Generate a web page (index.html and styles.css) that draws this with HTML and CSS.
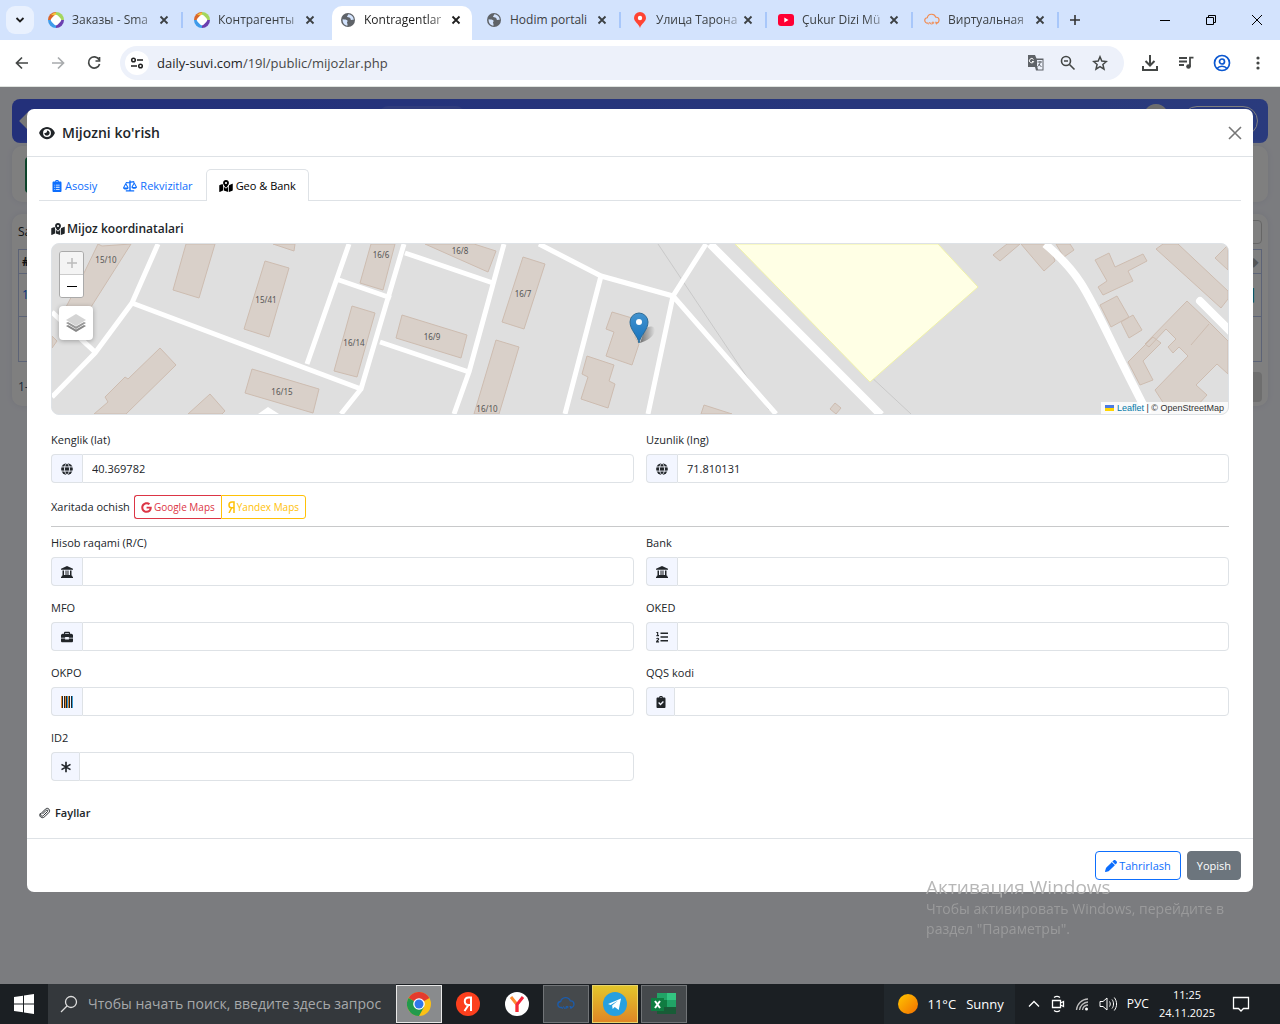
FILE: index.html
```html
<!DOCTYPE html>
<html lang="uz">
<head>
<meta charset="utf-8">
<meta name="viewport" content="width=device-width, initial-scale=1">
<title>Kontragentlar</title>
<link rel="stylesheet" href="styles.css">
</head>
<body>
<svg class="sprite" aria-hidden="true">
  <symbol id="x" viewBox="0 0 16 16"><path d="M4.500 4.500l7 7m0-7l-7 7" fill="none" stroke="currentColor" stroke-width="1.800"/></symbol>
  <symbol id="ring" viewBox="0 0 16 16"><path d="M8 0A8 8 0 0 0 0 8l3 0 5-5z" fill="#d9662c"/><path d="M8 0a8 8 0 0 1 8 8h-3L8 3z" fill="#a4d65e"/><path d="M16 8a8 8 0 0 1-8 8v-3l5-5z" fill="#6b3fb0"/><path d="M8 16A8 8 0 0 1 0 8h3l5 5z" fill="#3f9bea"/><path d="M3 3a7 7 0 0 1 5-2.500v3z" fill="#f3c33c"/><rect x="3.600" y="3.600" width="8.800" height="8.800" rx="2.500" transform="rotate(45 8 8)" fill="#fff"/></symbol>
  <symbol id="world" viewBox="0 0 16 16"><circle cx="8" cy="8" r="7" fill="#5f6368"/><path d="M2.600 7.200c2 .3 4.200.2 4.900 1.200.6 1-.9 1.600-.4 2.600.4.900.6 1.500.3 2.700-3-.3-5-3-4.800-6.500zM8.500 2.300c-1 .8-.5 1.700-1.600 2 .2 1.600 2.300.8 3.200 1.600.6.700.3 1.800 1.400 2 .9.200 1.500-.6 2.200.2.200-3-2-5.400-5.200-5.800z" fill="#d3e3fd"/></symbol>
  <symbol id="eye" viewBox="0 0 576 512"><path fill="currentColor" d="M288 32c-80.800 0-145.500 36.800-192.600 80.600C48.600 156 17.300 208 2.500 243.700c-3.300 7.900-3.300 16.700 0 24.600C17.300 304 48.600 356 95.400 399.400C142.500 443.200 207.200 480 288 480s145.500-36.800 192.600-80.600c46.800-43.500 78.100-95.400 93-131.100c3.300-7.900 3.300-16.700 0-24.600c-14.900-35.700-46.200-87.700-93-131.100C433.500 68.800 368.800 32 288 32zM144 256a144 144 0 1 1 288 0 144 144 0 1 1 -288 0zm144-64c0 35.300-28.700 64-64 64c-7.100 0-13.900-1.200-20.300-3.300c-5.500-1.800-11.900 1.600-11.700 7.400c.3 6.900 1.300 13.800 3.200 20.700c13.700 51.200 66.400 81.600 117.600 67.900s81.600-66.400 67.900-117.600c-11.100-41.500-47.800-69.400-88.600-71.100c-5.800-.2-9.200 6.100-7.400 11.700c2.100 6.400 3.300 13.200 3.300 20.300z"/></symbol>
  <symbol id="mapmark" viewBox="0 0 576 512"><path fill="currentColor" d="M288 0c-69.590 0-126 56.410-126 126 0 56.260 82.350 158.800 113.900 196.020 6.390 7.540 17.820 7.540 24.200 0C331.650 284.800 414 182.260 414 126 414 56.410 357.590 0 288 0zm0 168c-23.200 0-42-18.800-42-42s18.800-42 42-42 42 18.800 42 42-18.800 42-42 42zM20.120 215.950A32.006 32.006 0 0 0 0 245.660v250.320c0 11.320 11.430 19.060 21.940 14.860L160 448V214.920c-8.840-15.980-16.070-31.540-21.250-46.420L20.120 215.950zM288 359.670c-14.070 0-27.380-6.180-36.510-16.960-19.660-23.200-40.570-49.620-59.490-76.720v182l192 64V266c-18.920 27.090-39.820 53.520-59.490 76.720-9.130 10.770-22.440 16.950-36.510 16.950zm266.060-198.510L416 224v288l139.880-55.950A31.996 31.996 0 0 0 576 426.340V176.020c0-11.320-11.430-19.060-21.940-14.860z"/></symbol>
  <symbol id="clip" viewBox="0 0 384 512"><path fill="currentColor" fill-rule="evenodd" d="M48 64h64C112 20 145 0 192 0s80 20 80 64h64c27 0 48 21 48 48v352c0 27-21 48-48 48H48c-27 0-48-21-48-48V112c0-27 21-48 48-48zm144-24a24 24 0 1 0 0 48 24 24 0 1 0 0-48zM80 200v36h36v-36zm70 0v36h154v-36zM80 290v36h36v-36zm70 0v36h154v-36zM80 380v36h36v-36zm70 0v36h154v-36z"/></symbol>
  <symbol id="clipcheck" viewBox="0 0 384 512"><path fill="currentColor" fill-rule="evenodd" d="M48 64h64C112 20 145 0 192 0s80 20 80 64h64c27 0 48 21 48 48v352c0 27-21 48-48 48H48c-27 0-48-21-48-48V112c0-27 21-48 48-48zm144-24a24 24 0 1 0 0 48 24 24 0 1 0 0-48zM70 300l100 100 144-144-40-40-104 104-60-60z"/></symbol>
  <symbol id="scale" viewBox="0 0 640 512"><path fill="currentColor" fill-rule="evenodd" d="M288 90V0h64v50l160-18v58L352 110v338h160v64H128v-64h160V130l-160 4V70zM128 100L0 336c0 50 58 80 128 80s128-30 128-80zm0 96l70 132H58zM512 70L384 306c0 50 58 80 128 80s128-30 128-80zm0 96l70 132H442z"/></symbol>
  <symbol id="globe" viewBox="0 0 16 16"><circle cx="8" cy="8" r="7.800" fill="currentColor"/><path d="M0 5.200h16M0 10.800h16M8 0C3.500 4 3.500 12 8 16M8 0c4.500 4 4.500 12 0 16" fill="none" stroke="#f3f6ff" stroke-width="1.200"/></symbol>
  <symbol id="bank" viewBox="0 0 16 16"><path fill="currentColor" d="M8 0l8 3.500V5H0V3.500zM2 6h2v6h2V6h1.400v6h1.200V6H10v6h2V6h2v6.500l1 .5v1l1 .6V16H0v-1.400L1 14v-1l1-.5z"/></symbol>
  <symbol id="case" viewBox="0 0 16 16"><path fill="currentColor" fill-rule="evenodd" d="M4 3.500V2l1-1h6l1 1v1.500h2L16 5v4h-5.500V8h-5v1H0V5l2-1.500zM5.500 3.500h5v-1h-5zM0 10h5.500v1.200h5V10H16v4l-1 1H1l-1-1z"/></symbol>
  <symbol id="list" viewBox="0 0 16 16"><path d="M6 3h10M6 8h10M6 13h10" stroke="currentColor" stroke-width="1.800"/><path d="M.5 2h1.700v4M.5 6.200h3.500M.6 10.300c1.200-1 3-.6 3 .5 0 1.300-2.600 2.300-2.900 3.700h3.400" stroke="currentColor" stroke-width="1.500" fill="none"/></symbol>
  <symbol id="barcode" viewBox="0 0 12 12"><g shape-rendering="crispEdges"><path fill="#e0882f" d="M0 0h1v12H0zM4 0h1v12H4zM7 0h1v12H7z"/><path fill="#212529" d="M1 0h1v12H1zM3 0h1v12H3zM5 0h1v12H5zM8 0h1v12H8zM10 0h1v12h-1z"/><path fill="#3aa0d8" d="M6 0h1v12H6zM11 0h1v12h-1z"/></g></symbol>
  <symbol id="star6" viewBox="0 0 14 16"><path d="M7 1v14M1 4.500l12 7M13 4.500l-12 7" stroke="currentColor" stroke-width="2.200"/></symbol>
  <symbol id="google" viewBox="0 0 488 512"><path fill="currentColor" d="M488 261.800C488 403.300 391.100 504 248 504 110.800 504 0 393.200 0 256S110.800 8 248 8c66.800 0 123 24.500 166.300 64.900l-67.500 64.900C258.500 52.600 94.300 116.600 94.300 256c0 86.500 69.100 156.600 153.700 156.600 98.200 0 135-70.400 140.800-106.900H248v-85.300h236.100c2.300 12.700 3.900 24.900 3.900 41.400z"/></symbol>
  <symbol id="yandex" viewBox="0 0 7 12"><path d="M6 12V1H4C2 1 1 2.300 1 4s1 2.800 2.400 2.800H6M3.600 7L1 12" fill="none" stroke="currentColor" stroke-width="1.500"/></symbol>
  <symbol id="pencil" viewBox="0 0 512 512"><path fill="currentColor" d="M410.300 231l11.300-11.300-33.900-33.900-62.100-62.100L291.700 89.800l-11.300 11.300-22.600 22.600L58.600 322.900c-10.400 10.400-18 23.300-22.200 37.400L1 480.700c-2.500 8.400-.2 17.500 6.100 23.700s15.300 8.500 23.700 6.100l120.300-35.400c14.100-4.200 27-11.800 37.400-22.200L387.700 253.700 410.300 231zM362.700 18.700L348.300 33.200 325.700 55.800 314.300 67.100l33.900 33.900 62.100 62.100 33.900 33.900 11.300-11.300 22.600-22.600 14.500-14.500c25-25 25-65.500 0-90.500L453.300 18.700c-25-25-65.500-25-90.500 0z"/></symbol>
  <symbol id="paperclip" viewBox="0 0 16 16"><path d="M4.500 9.500L9.600 4.400c1.300-1.300 3 .4 1.700 1.700l-5.400 5.400c-2.200 2.200-5.200-.8-3-3L8.600 2.800c3-3 7.600 1.400 4.500 4.600L7.500 13c-3.800 3.500-8.500-1-5.500-4.800" fill="none" stroke="currentColor" stroke-width="1.300"/></symbol>
  <symbol id="cloud" viewBox="0 0 18 16"><path d="M5 11.500H4a3 3 0 0 1-.3-6 5 5 0 0 1 9.600-.6 3.300 3.300 0 0 1 .7 6.600h-1" fill="none" stroke="currentColor" stroke-width="1.300"/><path d="M5 13l1.500-2.500L8 13m1-2.500V13m0-2.500h2v1.200H9m3.500-1.200h1.500v2.500" fill="none" stroke="currentColor"/></symbol>
</svg>

<header class="browser">
  <div class="tabstrip">
    <button class="tabsearch" aria-label="Tabs"><svg width="12" height="12" viewBox="0 0 12 12"><path d="M2.500 4L6 7.500 9.500 4" fill="none" stroke="#1f1f1f" stroke-width="1.800"/></svg></button>
    <div class="tab sep"><svg class="fav"><use href="#ring"/></svg><span class="tabname fade">Заказы - Sma</span><button class="tabx" aria-label="Close"><svg class="i16"><use href="#x"/></svg></button></div>
    <div class="tab"><svg class="fav"><use href="#ring"/></svg><span class="tabname fade">Контрагенты</span><button class="tabx" aria-label="Close"><svg class="i16"><use href="#x"/></svg></button></div>
    <div class="tab active"><svg class="fav"><use href="#world"/></svg><span class="tabname fade">Kontragentlar</span><button class="tabx" aria-label="Close"><svg class="i16"><use href="#x"/></svg></button></div>
    <div class="tab sep"><svg class="fav"><use href="#world"/></svg><span class="tabname">Hodim portali</span><button class="tabx" aria-label="Close"><svg class="i16"><use href="#x"/></svg></button></div>
    <div class="tab sep"><svg class="fav" viewBox="0 0 16 16"><path d="M8 0a6 6 0 0 1 6 6c0 4-4.500 5-6 10C6.500 11 2 10 2 6a6 6 0 0 1 6-6z" fill="#f43"/><circle cx="8" cy="6" r="2.200" fill="#fff"/></svg><span class="tabname fade">Улица Тарона</span><button class="tabx" aria-label="Close"><svg class="i16"><use href="#x"/></svg></button></div>
    <div class="tab sep"><svg class="fav" viewBox="0 0 16 16"><rect y="2" width="16" height="12" rx="3" fill="#f03"/><path d="M6.300 5.500v5l4.200-2.500z" fill="#fff"/></svg><span class="tabname fade">Çukur Dizi Mü</span><button class="tabx" aria-label="Close"><svg class="i16"><use href="#x"/></svg></button></div>
    <div class="tab sep"><svg class="fav orange"><use href="#cloud"/></svg><span class="tabname fade">Виртуальная</span><button class="tabx" aria-label="Close"><svg class="i16"><use href="#x"/></svg></button></div>
    <button class="newtab" aria-label="New tab"><svg width="12" height="12" viewBox="0 0 12 12"><path d="M6 1v10M1 6h10" stroke="#333" stroke-width="1.600"/></svg></button>
    <div class="winbtns">
      <button aria-label="Minimize"><svg width="12" height="12"><path d="M1 6.500h10" stroke="#000"/></svg></button>
      <button aria-label="Restore"><svg width="12" height="12"><path d="M1.500 3.500h7v7h-7zM3.500 3V1.500h7v7H9" fill="none" stroke="#000"/></svg></button>
      <button aria-label="Close window"><svg width="12" height="12"><path d="M1 1l10 10M11 1L1 11" stroke="#000"/></svg></button>
    </div>
  </div>
  <div class="toolbar">
    <button aria-label="Back"><svg width="16" height="16"><path d="M14 8H3m5-5.500L2.500 8 8 13.500" fill="none" stroke="#444746" stroke-width="1.700"/></svg></button>
    <button aria-label="Forward"><svg width="16" height="16"><path d="M2 8h11M8 2.500L13.500 8 8 13.500" fill="none" stroke="#a8abad" stroke-width="1.700"/></svg></button>
    <button aria-label="Reload"><svg width="16" height="16"><path d="M13 4.500A5.600 5.600 0 1 0 13.600 9M13.500 2v4H9.500" fill="none" stroke="#444746" stroke-width="1.700"/></svg></button>
    <div class="omnibox">
      <span class="site"><svg width="14" height="14"><path d="M7 4h6M1 10h6" stroke="#1f1f1f" stroke-width="1.700"/><circle cx="3.500" cy="4" r="1.800" fill="none" stroke="#1f1f1f" stroke-width="1.500"/><circle cx="10.500" cy="10" r="1.800" fill="none" stroke="#1f1f1f" stroke-width="1.500"/></svg></span>
      <span class="url">daily-suvi.com<span class="path">/19l/public/mijozlar.php</span></span>
      <button aria-label="Translate"><svg width="18" height="18"><path d="M1 1h7l1.500 3.500H16.500v12H9L8 13H1z" fill="#5f6368"/><path d="M10 6h5.500v9.500H11l-1-4z" fill="#edf1fa"/><path d="M10.500 8h4.500M13 7v1.500c0 2-1.500 3.500-2.500 4M11.500 10l3 3" stroke="#5f6368" fill="none"/><path d="M6.500 5.500a2.200 2.200 0 1 0 .2 2H5" stroke="#fff" fill="none"/></svg></button>
      <button aria-label="Zoom"><svg width="16" height="16"><circle cx="6" cy="6" r="4.500" fill="none" stroke="#444746" stroke-width="1.600"/><path d="M9.500 9.500l5 5M4 6h4" stroke="#444746" stroke-width="1.600"/></svg></button>
      <button aria-label="Bookmark"><svg width="16" height="16"><path d="M8 1.800l1.800 4.300 4.600.4-3.500 3 1.100 4.600L8 11.700l-4 2.400 1.100-4.600-3.500-3 4.600-.4z" fill="none" stroke="#444746" stroke-width="1.500"/></svg></button>
    </div>
    <button aria-label="Downloads"><svg width="18" height="18"><path d="M9 1v10M4.500 7L9 11.500 13.500 7M2 12v4h14v-4" fill="none" stroke="#444746" stroke-width="2"/></svg></button>
    <button aria-label="Media"><svg width="18" height="18"><path d="M2 4h8M2 7.500h8M2 11h5M16.500 3.700H13v9" fill="none" stroke="#444746" stroke-width="1.800"/><circle cx="11.500" cy="12.500" r="2.300" fill="#444746"/></svg></button>
    <button aria-label="Profile"><svg width="18" height="18"><g fill="none" stroke="#0b57d0" stroke-width="1.700"><circle cx="9" cy="9" r="7.500"/><circle cx="9" cy="7.500" r="2.500"/><path d="M4 14.500c2.500-3 7.500-3 10 0"/></g></svg></button>
    <button aria-label="Menu"><svg width="16" height="16" fill="#444746"><circle cx="8" cy="3" r="1.600"/><circle cx="8" cy="8" r="1.600"/><circle cx="8" cy="13" r="1.600"/></svg></button>
  </div>
</header>

<main class="viewport">
  <div class="app">
    <div class="appbar"><span class="diamond"></span><span class="apppill"></span><span class="avatar"></span><span class="outline"></span></div>
    <div class="appcard"><span class="green"></span></div>
    <div class="appcard tall">
      <div class="filter"><span>Sahifada</span><span class="searchbox"></span></div>
      <table class="grid"><tr><th>#</th><th class="last">◆</th></tr><tr class="mid"><td class="blue">1</td><td class="last teal">▌</td></tr><tr class="low"><td></td><td></td></tr></table>
      <div class="filter foot"><span>1-1</span><span class="pager"></span></div>
    </div>
  </div>
  <div class="backdrop">
    <section class="modal" role="dialog" aria-labelledby="dlg-title">
      <div class="modal-head">
        <svg class="eye"><use href="#eye"/></svg><h1 id="dlg-title">Mijozni ko'rish</h1>
        <button class="close" aria-label="Yopish"><svg width="14" height="14"><path d="M1 1l12 12M13 1L1 13" stroke="#777" stroke-width="1.600"/></svg></button>
      </div>
      <div class="modal-body">
        <nav class="tabs">
          <a href="#asosiy"><svg class="narrow"><use href="#clip"/></svg>Asosiy</a>
          <a href="#rekvizitlar"><svg class="wide"><use href="#scale"/></svg>Rekvizitlar</a>
          <a href="#geo" class="on"><svg class="wide"><use href="#mapmark"/></svg>Geo &amp; Bank</a>
        </nav>
        <div class="pane">
          <h2><svg class="wide"><use href="#mapmark"/></svg>Mijoz koordinatalari</h2>
          <div class="map">
            <svg class="tiles" viewBox="52 244 1176 170" preserveAspectRatio="xMidYMid slice">
              <rect x="52" y="244" width="1176" height="170" fill="#dfdfdf"/>
              <g fill="#d9d0c9" stroke="#cdbcb0">
                <path d="M131 244L102 246 98 244 84 273 66 307 91 307 131 244z"/>
                <path d="M186 244h29l-16 54-26-8zM273 244l21 7 1-7zM265 261l24 7-20 69-25-8zM371 244h24l-12 46-23-7zM352 306l23 7-18 64-23-6zM402 315l65 20-6 23-65-20z"/>
                <path d="M425 244l63 28 8-21-22-7zM523 257l22 7-21 65-22-7zM496 340l23 7-20 67h-25zM252 369l67 20-6 24-68-20z"/>
                <path d="M94 414l14-12-3-5 20-20 3 2 32-31 16 17-50 49zM188 414l22-20 15 17-3 3zM52 336l5 5-5 7z"/>
                <path d="M612 312l30 9-3 9-4 7 4 7-7 21-26-9 8-24-8-3zM587 356l27 9-5 16 6 3-7 24-27-9 7-22-6-3zM704 405l28 9h-31zM773 244l5 5 5-5zM835 403l6 5-5 6-6-5z"/>
                <path d="M993 255l14-11h13l-20 17zM1021 244h28l6 17-11 10zM1056 244h14l4 6-10 7zM1095 260l14-7 6 14 28-13 4 7-19 10 5 10-30 14-5-8 9-6zM1156 249l7-5h15l50 47v8l-7 9zM1215 258l13-13v25zM1100 305l17-9 12 21-18 10zM1121 322l12-7 9 15-13 8z"/>
                <path d="M1187 301l22 21 19 19v33l-11-10-21 21 11 10-11 12h-20l-12-3-9-14 33-34-9-9-6 6-5-6 8-8-10-10-17 18-4-3zM1153 337l8 6-18 18 10 19-13 5-12-23z"/>
              </g>
              <path d="M1191 345l18-21" stroke="#cdbcb0"/>
              <g fill="none" stroke="#c9c9c9"><path d="M658 244l111 166M868 374l43 40"/></g>
              <path d="M735 244h203l40 43-108 95z" fill="#ffffe5" stroke="#f1f3a8"/>
              <g fill="none" stroke="#fff" stroke-width="5" stroke-linejoin="round">
                <path d="M158 244l-26 59-37 50-43 44M132 303l229 86 43-145M361 389l-20 25M349 244l-42 120M339 280l52 18M380 342l89 30M405 253l88 30M504 244l-35 128-15 42M539 244l62 32 72 20 33-52M601 276l-36 138M673 296l-25 118M673 296l103 118M52 312l43 40"/>
              </g>
              <path d="M710 244l171 171M1045 244c45 37 45 60 103 170" fill="none" stroke="#fff" stroke-width="8"/>
              <path d="M1200 301l32 32" stroke="#fff" stroke-width="8" stroke-linecap="round"/>
              <path d="M258 414l10-7 11 7z" fill="#fff"/>
              <g class="nums"><text x="106" y="263">15/10</text><text x="266" y="303">15/41</text><text x="381" y="258">16/6</text><text x="354" y="346">16/14</text><text x="432" y="340">16/9</text><text x="460" y="254">16/8</text><text x="523" y="297">16/7</text><text x="487" y="412">16/10</text><text x="282" y="395">16/15</text></g>
              <defs><linearGradient id="pin" x2="0" y2="1"><stop stop-color="#4293cf"/><stop offset="1" stop-color="#1672bd"/></linearGradient><linearGradient id="shade"><stop stop-color="#000" stop-opacity=".5"/><stop offset="1" stop-color="#000" stop-opacity="0"/></linearGradient></defs>
              <path d="M640 343l4-12c4-7 12-5 11 0-1 5-8 10-15 12z" fill="url(#shade)"/>
              <path d="M639 343c-1-7-9-13-9-21a9 9 0 0 1 18 0c0 8-8 14-9 21z" fill="url(#pin)" stroke="#2e6c97"/>
              <circle cx="639" cy="322" r="3" fill="#fff"/>
            </svg>
            <div class="controls">
              <div class="zoom"><button class="off" aria-label="Zoom in"><svg width="12" height="12"><path d="M6 1v10M1 6h10" stroke="#bbb" stroke-width="1.500"/></svg></button><button aria-label="Zoom out"><svg width="12" height="12"><path d="M1 6.500h10" stroke="#000"/></svg></button></div>
              <button class="layers" aria-label="Layers"><svg width="24" height="24"><path d="M2 15l10 6 10-6-2-1-8 4.500L4 14z" fill="#888"/><path d="M2 12l10 6 10-6-2-1-8 4.500L4 11z" fill="#999"/><path d="M12 3l10 6-10 6L2 9z" fill="#d4d4d4"/></svg></button>
            </div>
            <div class="credit"><svg width="9" height="6"><path fill="#4c7be1" d="M0 0h9v3H0z"/><path fill="#ffd500" d="M0 3h9v3H0z"/></svg> <a href="#leaflet">Leaflet</a> | © OpenStreetMap</div>
          </div>
          <div class="fields">
            <div class="field"><label for="lat">Kenglik (lat)</label><div class="group"><span class="pre"><svg class="ic"><use href="#globe"/></svg></span><input id="lat" value="40.369782"></div></div>
            <div class="field"><label for="lng">Uzunlik (lng)</label><div class="group"><span class="pre"><svg class="ic"><use href="#globe"/></svg></span><input id="lng" value="71.810131"></div></div>
          </div>
          <div class="openin"><span>Xaritada ochish</span><div class="btns"><button class="red"><svg class="g"><use href="#google"/></svg>Google Maps</button><button class="yellow"><svg class="y"><use href="#yandex"/></svg>Yandex Maps</button></div></div>
          <hr>
          <div class="fields">
            <div class="field"><label for="rc">Hisob raqami (R/C)</label><div class="group"><span class="pre"><svg class="ic"><use href="#bank"/></svg></span><input id="rc"></div></div>
            <div class="field"><label for="bk">Bank</label><div class="group"><span class="pre"><svg class="ic"><use href="#bank"/></svg></span><input id="bk"></div></div>
            <div class="field"><label for="mfo">MFO</label><div class="group"><span class="pre"><svg class="ic"><use href="#case"/></svg></span><input id="mfo"></div></div>
            <div class="field"><label for="oked">OKED</label><div class="group"><span class="pre"><svg class="ic"><use href="#list"/></svg></span><input id="oked"></div></div>
            <div class="field"><label for="okpo">OKPO</label><div class="group"><span class="pre"><svg class="ic"><use href="#barcode"/></svg></span><input id="okpo"></div></div>
            <div class="field"><label for="qqs">QQS kodi</label><div class="group"><span class="pre slim"><svg class="ic"><use href="#clipcheck"/></svg></span><input id="qqs"></div></div>
            <div class="field"><label for="id2">ID2</label><div class="group"><span class="pre slim"><svg class="ic"><use href="#star6"/></svg></span><input id="id2"></div></div>
          </div>
        </div>
        <h2 class="files"><svg class="ic"><use href="#paperclip"/></svg>Fayllar</h2>
      </div>
      <div class="modal-foot">
        <button class="edit"><svg class="ic"><use href="#pencil"/></svg>Tahrirlash</button>
        <button class="shut">Yopish</button>
      </div>
    </section>
  </div>
</main>

<aside class="watermark"><strong>Активация Windows</strong><span>Чтобы активировать Windows, перейдите в<br>раздел "Параметры".</span></aside>

<footer class="taskbar">
  <button class="start" aria-label="Start"><svg width="20" height="20" fill="#fff"><path d="M0 3l9-1.300V9.500H0zM10 1.600L20 0v9.500H10zM0 10.500h9v7.800L0 17zM10 10.500h10V20l-10-1.600z"/></svg></button>
  <label class="search"><svg width="18" height="18"><circle cx="11" cy="7" r="5.500" fill="none" stroke="#ddd" stroke-width="1.300"/><path d="M7 11l-6 6" stroke="#ddd" stroke-width="1.300"/></svg><input aria-label="Search" placeholder="Чтобы начать поиск, введите здесь запрос"></label>
  <div class="pins">
    <button class="pin current" aria-label="Chrome"><svg width="24" height="24" viewBox="0 0 24 24"><circle cx="12" cy="12" r="12" fill="#fbc116"/><path d="M12 12L1.600 6A12 12 0 0 1 22.400 6z" fill="#e33b2e"/><path d="M1.600 6A12 12 0 0 0 12 24l5-9-5-3z" fill="#229a4c"/><circle cx="12" cy="12" r="5.800" fill="#fff"/><circle cx="12" cy="12" r="4.500" fill="#2f77ea"/></svg></button>
    <button class="pin" aria-label="Yandex"><svg width="24" height="24" viewBox="0 0 24 24"><circle cx="12" cy="12" r="12" fill="#fc3f1d"/><path d="M15 19V5.500h-2.200c-2.500 0-4 1.500-4 3.800 0 2.200 1.300 3.700 3.700 3.700H15M12.500 13L8.500 19" fill="none" stroke="#fff" stroke-width="2"/></svg></button>
    <button class="pin" aria-label="Yandex Browser"><svg width="24" height="24" viewBox="0 0 24 24"><circle cx="12" cy="12" r="12" fill="#fff"/><path d="M6 5l6 7.500V20" fill="none" stroke="#ff8a30" stroke-width="3"/><path d="M18 5l-6 7.500V20" fill="none" stroke="#f5273c" stroke-width="3"/></svg></button>
    <button class="pin open" aria-label="Cloud"><svg class="cloud"><use href="#cloud"/></svg></button>
    <button class="pin alert" aria-label="Telegram"><svg width="24" height="24" viewBox="0 0 24 24"><circle cx="12" cy="12" r="12" fill="#27a0df"/><path d="M5 12l13-5.500-2.300 11.500-4-3-2 2-.6-3.500 6-5-7.500 4.500z" fill="#fff"/></svg></button>
    <button class="pin open" aria-label="Excel"><svg width="26" height="24" viewBox="0 0 26 24"><path d="M6 1h19v21H6z" fill="#21a366"/><path d="M6 8h10v7H6z" fill="#107c41"/><path d="M16 1h9v7h-9z" fill="#33c481"/><path d="M16 15h9v7H6v-7z" fill="#185c37"/><path d="M0 6h13v13H0z" fill="#107c41"/><path d="M4 9l5 7M9 9l-5 7" stroke="#fff" stroke-width="2"/></svg></button>
  </div>
  <div class="weather"><svg width="20" height="20"><defs><linearGradient id="sun" x2="1" y2="1"><stop stop-color="#ffc600"/><stop offset="1" stop-color="#f36f00"/></linearGradient></defs><circle cx="10" cy="10" r="10" fill="url(#sun)"/></svg><span>11°C</span><span>Sunny</span></div>
  <div class="tray">
    <svg width="14" height="14"><path d="M2 9.500l5-5 5 5" fill="none" stroke="#fff" stroke-width="1.300"/></svg>
    <svg width="14" height="18"><path d="M1.500 5.500h8v7h-8zM9.500 8l3-1.500v5l-3-1.500M3 2.500c2-1.500 4-1.500 6 0M3 15.500c2 1.500 4 1.500 6 0" fill="none" stroke="#fff" stroke-width="1.300"/></svg>
    <svg width="14" height="14"><path d="M1.500 13A12 12 0 0 1 13 2M4.500 13A9 9 0 0 1 13 5M7.500 13A6 6 0 0 1 13 8" fill="none" stroke="#bbb" stroke-width="1.300"/><circle cx="11.500" cy="12" r="1.500" fill="#fff"/></svg>
    <svg width="18" height="16"><path d="M1 5.500h3l4-3.500v12L4 10.500H1zM10.500 5.500c1 1.500 1 3.500 0 5M13 3.500c2 2.500 2 6.500 0 9M15.300 1.500c3 4 3 9 0 13" fill="none" stroke="#fff"/></svg>
    <span class="lang">РУС</span>
    <span class="clock">11:25<br>24.11.2025</span>
    <svg width="18" height="18"><path d="M1.500 2.500h15v11h-5l-2.500 2.500-2.500-2.500h-5z" fill="none" stroke="#fff" stroke-width="1.300"/></svg>
  </div>
</footer>
</body>
</html>
```
FILE: styles.css
```css
* { box-sizing: border-box; }
body { margin: 0; min-height: 100vh; display: flex; flex-direction: column; font-family: "Open Sans", "Noto Sans", sans-serif; font-size: 12px; line-height: 18px; color: #212529; background: #7b7c80; }
button, input { font: inherit; color: inherit; margin: 0; }
button { display: flex; align-items: center; justify-content: center; padding: 0; border: 0; background: none; }
svg { flex: none; }
a { text-decoration: none; }
.sprite { position: absolute; width: 0; height: 0; }
.i16 { width: 16px; height: 16px; }

.tabstrip { display: flex; height: 40px; background: #d3e3fd; padding-left: 6px; }
.tabsearch { width: 28px; height: 28px; margin: 6px 3px 0 0; border-radius: 9px; background: #e9f1fe; }
.tab { display: flex; flex: 0 1 146px; min-width: 0; align-items: center; position: relative; padding: 0 11px; color: #3c4043; }
.tab.sep::after { content: ""; position: absolute; right: 0; top: 12px; width: 2px; height: 16px; background: #a8c7fa; }
.fav { width: 16px; height: 16px; margin-right: 8px; }
.orange { color: #f28b50; }
.tabname { flex: 1; min-width: 0; overflow: hidden; white-space: nowrap; }
.tabname.fade { mask-image: linear-gradient(90deg, #000 75%, rgba(0, 0, 0, .25)); }
.tabx { width: 16px; height: 16px; }
.tab.active { color: #1f1f1f; }
.tab.active::before { content: ""; position: absolute; z-index: 0; inset: 6px 3px 0; background: #fff; border-radius: 10px 10px 0 0; }
.tab.active > * { position: relative; }
.newtab { width: 32px; }
.winbtns { display: flex; margin-left: auto; }
.winbtns button { width: 46px; }
.toolbar { display: flex; align-items: center; height: 47px; padding: 0 4px; background: #fff; border-bottom: 1px solid #dfe3df; }
.toolbar > button { width: 36px; height: 34px; }
.omnibox { flex: 1; display: flex; align-items: center; height: 34px; margin: 0 8px; padding: 0 8px 0 5px; border-radius: 17px; background: #edf1fa; }
.site { display: flex; align-items: center; justify-content: center; width: 24px; height: 24px; margin-right: 8px; border-radius: 50%; background: #fff; }
.url { flex: 1; font-size: 13px; color: #1f1f1f; }
.path { color: #474747; }
.omnibox button { width: 32px; height: 32px; }

.viewport { flex: 1; display: grid; background: #f7f8ff; }
.app, .backdrop { grid-area: 1 / 1; min-width: 0; }
.app { padding: 12px; }
.appbar { display: flex; align-items: center; height: 44px; padding: 0 10px; border-radius: 8px; background: linear-gradient(90deg, #4660f4, #5576fa); }
.diamond { width: 14px; height: 14px; background: #eee; transform: rotate(45deg); }
.apppill { width: 84px; height: 30px; margin-left: 344px; border-radius: 8px; background: #6078f8; }
.avatar { width: 28px; height: 34px; margin-left: auto; border-radius: 50%; background: #ddd; }
.outline { width: 76px; height: 30px; margin-left: 12px; border: 1px solid #fff; border-radius: 15px; }
.appcard { height: 56px; margin-top: 3px; padding: 11px 13px; border-radius: 10px; background: #fff; box-shadow: 0 0 6px #e4e6f2; }
.green { display: block; width: 60px; height: 36px; border-radius: 4px; background: #198754; }
.appcard.tall { height: 192px; margin-top: 12px; padding: 6px; }
.filter { display: flex; align-items: center; justify-content: space-between; height: 24px; }
.searchbox { width: 180px; height: 24px; border: 1px solid #ccc; border-radius: 4px; }
.grid { width: 100%; margin: 5px 0; border-collapse: collapse; }
.grid th, .grid td { height: 24px; padding: 0 3px; border: 1px solid #b8c6ec; text-align: left; }
.grid .mid td { height: 43px; }
.grid .low td { height: 45px; }
.grid .last { text-align: right; color: #aaa; }
.grid .blue { color: #0d6efd; }
.grid .teal { color: #199; }
.foot { color: #357; height: 40px; }
.pager { width: 60px; height: 30px; border-radius: 4px; background: #ddd; }
.backdrop { position: relative; padding: 22px 27px; background: rgba(0, 0, 0, .5); }

.modal { font-size: 11px; background: #fff; border-radius: 7px; overflow: hidden; }
.modal-head { display: flex; align-items: center; height: 48px; padding: 0 11px 0 12px; border-bottom: 1px solid #dee2e6; }
.modal-head h1 { flex: 1; margin: 0 0 0 7px; font-size: 14px; font-weight: 600; }
.eye { width: 16px; height: 14px; }
.close { width: 14px; height: 14px; }
.modal-body { padding: 12px; }
.tabs { display: flex; border-bottom: 1px solid #dee2e6; }
.tabs a { display: flex; align-items: center; gap: 3px; height: 32px; margin-bottom: -1px; padding: 0 12px; color: #0d6efd; border: 1px solid transparent; border-bottom: 0; border-radius: 5px 5px 0 0; }
.tabs a.on { color: #000; background: #fff; border-color: #dee2e6; }
.narrow { width: 10px; height: 12px; }
.wide { width: 14px; height: 12px; }
.pane { padding: 19px 12px 0; }
h2 { display: flex; align-items: center; gap: 2px; margin: 0 0 5px; font-size: 12px; line-height: 18px; font-weight: 600; }
.map { position: relative; height: 172px; border: 1px solid #dee2e6; border-radius: 8px; overflow: hidden; background: #dfdfdf; }
.tiles { display: block; width: 100%; height: 100%; }
.nums { font-family: "Noto Sans", sans-serif; font-size: 8px; fill: #555; text-anchor: middle; }
.controls { position: absolute; left: 7px; top: 7px; }
.zoom { width: 25px; border: 1px solid #aaa; border-radius: 3px; overflow: hidden; }
.zoom button { width: 23px; height: 22px; background: #fff; }
.zoom .off { height: 23px; background: #f4f4f4; border-bottom: 1px solid #ccc; }
.layers { width: 34px; height: 34px; margin-top: 8px; border-radius: 4px; background: #fff; box-shadow: 0 1px 5px rgba(0, 0, 0, .3); }
.credit { position: absolute; right: 0; bottom: 0; padding: 0 4px; font: 9px/12px "Liberation Sans", sans-serif; color: #333; background: rgba(255, 255, 255, .8); }
.credit a { color: #0078a8; }
.fields { display: grid; grid-template-columns: 1fr 1fr; gap: 13px 12px; }
.map + .fields { margin-top: 16px; }
.field label { display: block; margin-bottom: 5px; }
.group { display: flex; height: 29px; }
.pre { display: flex; align-items: center; justify-content: center; width: 31px; border: 1px solid #dee2e6; border-right: 0; border-radius: 4px 0 0 4px; background: #f3f6ff; }
.slim { width: 28px; }
.ic { width: 12px; height: 12px; }
.group input { flex: 1; min-width: 0; padding: 0 9px; border: 1px solid #dee2e6; border-radius: 0 4px 4px 0; background: #fff; }
.openin { display: flex; align-items: center; gap: 4px; margin-top: 12px; }
.btns { display: flex; }
.btns button { height: 24px; padding: 0 6px; gap: 2px; font-size: 10px; border: 1px solid; white-space: nowrap; }
.red { color: #dc3545; border-radius: 3px 0 0 3px; }
.btns .red { border-right: 0; }
.yellow { color: #ffc107; border-radius: 0 3px 3px 0; }
.g { width: 11px; height: 11px; }
.y { width: 7px; height: 12px; }
hr { margin: 7px 0; border: 0; border-top: 1px solid #c8c9ca; }
.files { margin: 23px 0 4px; gap: 4px; font-size: 11px; }
.modal-foot { display: flex; justify-content: flex-end; gap: 6px; padding: 12px; border-top: 1px solid #dee2e6; }
.modal-foot button { height: 29px; padding: 0 9px; gap: 2px; border: 1px solid #0d6efd; border-radius: 4px; color: #0d6efd; }
.modal-foot .shut { color: #fff; background: #6c757d; border-color: #6c757d; font-size: 11px; font-weight: 500; }

.watermark { position: fixed; z-index: 2; right: 56px; bottom: 85px; display: flex; flex-direction: column; font-size: 14px; line-height: 20px; color: rgba(170, 170, 170, .65); pointer-events: none; }
.watermark strong { font-size: 19px; line-height: 24px; font-weight: 400; color: rgba(175, 175, 175, .9); }

.taskbar { display: flex; height: 40px; background: #1b1f23; color: #fff; font-size: 14px; }
.start { width: 48px; }
.search { display: flex; align-items: center; flex: 0 1 348px; min-width: 0; padding: 0 10px 0 12px; background: #34383c; }
.search input { flex: 1; min-width: 0; margin-left: 10px; padding: 0; border: 0; background: none; }
.search input::placeholder { color: #a6a8aa; opacity: 1; }
.pins { display: flex; gap: 3px; align-items: center; }
.pin { width: 46px; height: 38px; }
.current { background: #898b8d; border: 1px solid #e8e8e8; }
.open { background: #45494c; border: 1px solid #717477; }
.alert { background: linear-gradient(#e3c62b, #df8625); border: 1px solid #e9d46a; }
.cloud { width: 18px; height: 16px; color: #1c5cab; }
.weather { display: flex; align-items: center; gap: 10px; margin-left: auto; padding: 0 11px 0 14px; background: #21272c; font-size: 13px; }
.tray { display: flex; align-items: center; gap: 10px; padding: 0 30px 0 12px; font-size: 12px; }
.clock { margin-right: 7px; font-size: 11px; text-align: center; line-height: 18px; }
```
